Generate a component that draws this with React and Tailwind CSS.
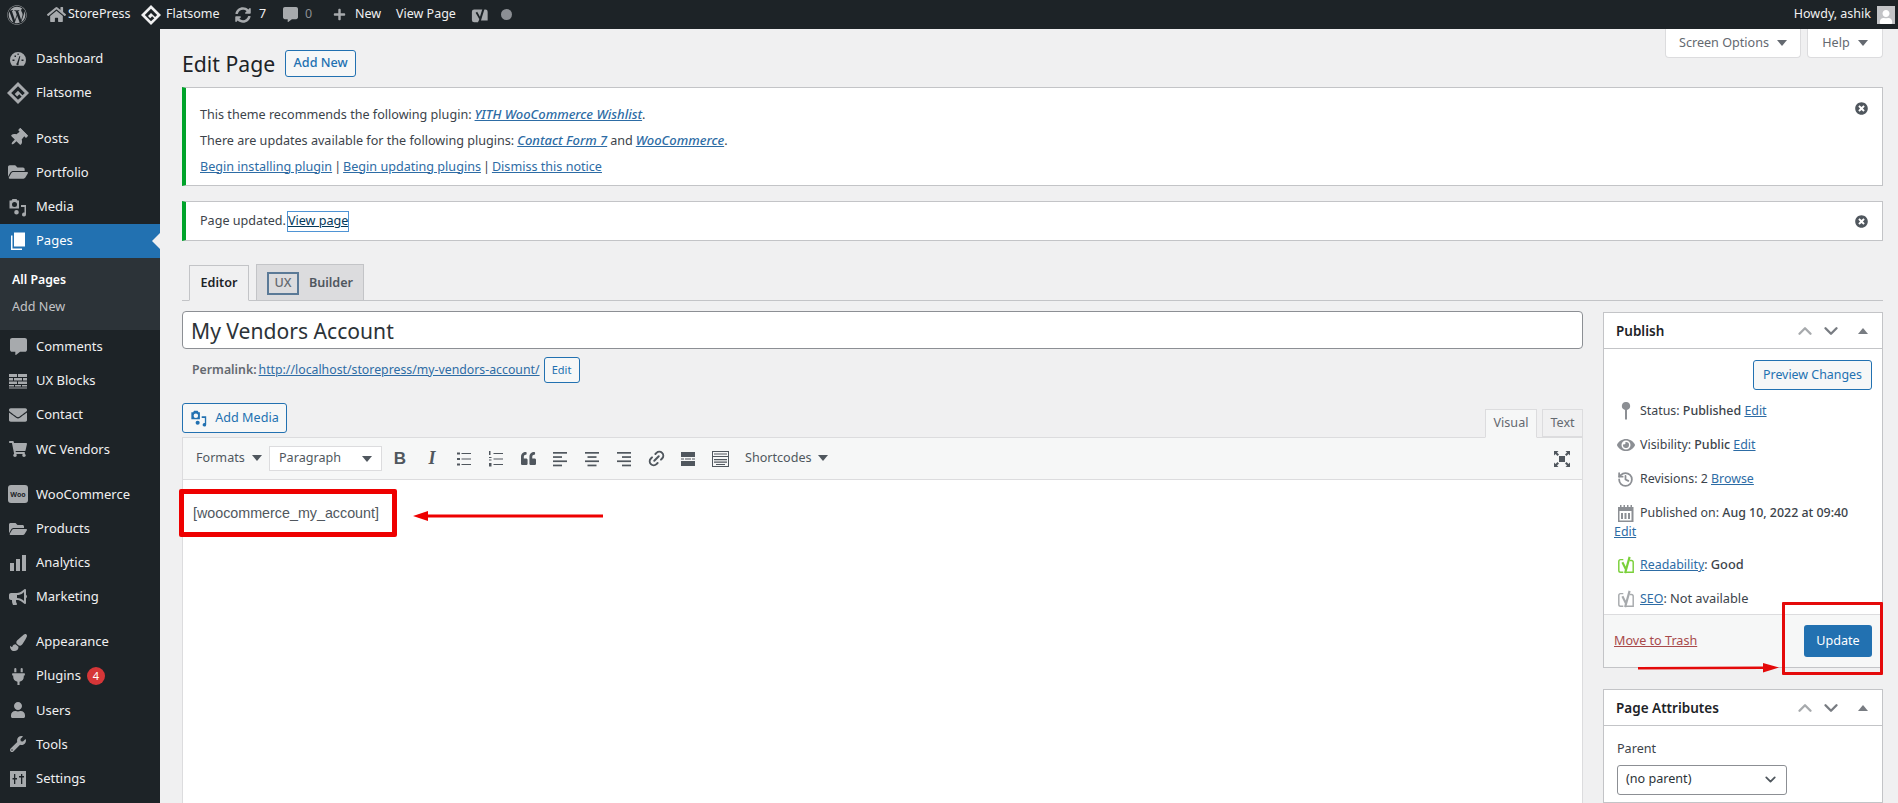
import { ChevronUp, ChevronDown, History, Link2 } from 'lucide-react'
import {
  FaWordpress, FaHome, FaSyncAlt, FaCommentAlt, FaPlus, FaThumbtack, FaFolderOpen, FaEnvelope,
  FaShoppingCart, FaBullhorn, FaPaintBrush, FaPlug, FaUser, FaWrench, FaEye, FaQuoteLeft, FaTimesCircle,
} from 'react-icons/fa'

const Gauge = ({ size = 20 }) => (
  <svg width={size} height={size} viewBox="0 0 20 20">
    <path fill="currentColor" d="M10 3a8 8 0 0 0-8 8c0 2.200.9 4.200 2.300 5.700h11.400A8 8 0 0 0 18 11a8 8 0 0 0-8-8z" />
    <path fill="#1d2327" d="M9 14l2.500-7 .8.300L10.600 14.600a1.200 1.200 0 1 1-1.600-.6zM4.500 10.500h2v1.500h-2zM13.500 10.500h2v1.500h-2zM6.500 6.500h1.500V8H6.500zM9.500 4.500h1.200V6H9.500z" />
  </svg>
)

const Diamond = ({ size = 20, hole = '#1d2327' }) => (
  <svg width={size} height={size} viewBox="0 0 20 20">
    <path fill="currentColor" d="M10 0l10 10-10 10L0 10z" />
    <path fill={hole} d="M10 3.800L16.200 10l-2.100 2.100L10 8l-3 3 2.200 2.200 2-2 2.100 2.100L10 16.200 3.800 10z" />
  </svg>
)

const MediaIcon = ({ size = 20 }) => (
  <svg width={size} height={size} viewBox="0 0 20 20" fill="currentColor">
    <path fillRule="evenodd" d="M1.500 3.500h2l1-1.500h4l1 1.500h1.500v8h-9.500zM6.500 5a2.500 2.500 0 1 0 0 5 2.500 2.500 0 0 0 0-5z" />
    <path d="M13 8h5v9.500a2 2 0 1 1-1.500-1.900V10H13zM8.500 13a2.300 2.300 0 1 1 0 4.600 2.300 2.300 0 0 1 0-4.600z" />
  </svg>
)

const PagesIcon = ({ size = 20 }) => (
  <svg width={size} height={size} viewBox="0 0 20 20" fill="currentColor">
    <path d="M6 1.500h11v14H6z" />
    <path d="M3 4.500h1.500v13H14V19H3z" />
  </svg>
)

const BlocksIcon = ({ size = 20 }) => (
  <svg width={size} height={size} viewBox="0 0 20 20" fill="currentColor">
    <path d="M1 3h8v3H1zM10 3h9v3h-9zM1 7h4v2.500H1zM6 7h8v2.500H6zM15 7h4v2.500h-4zM1 10.500h8V13H1zM10 10.500h9V13h-9zM1 14h5v1.500H1zM7 14h6v1.500H7zM14 14h5v1.500h-5zM1 16.500h18V17.500H1z" />
  </svg>
)

const WooIcon = () => (
  <div className="w-[20px] h-[18px] rounded-[3px] bg-[#a7aaad] text-[#1d2327] flex items-center justify-center text-[7px] font-bold leading-none">
    Woo
  </div>
)

const BarsIcon = ({ size = 20 }) => (
  <svg width={size} height={size} viewBox="0 0 20 20" fill="currentColor">
    <path d="M2 10h4v8H2zM8 6h4v12H8zM14 2h4v16h-4z" />
  </svg>
)

const SlidersIcon = ({ size = 20 }) => (
  <svg width={size} height={size} viewBox="0 0 20 20" fill="currentColor">
    <path fillRule="evenodd" d="M2 2h16v16H2zM6 5v4H4.500v1.500H6V15h1.300v-4.500H9V9H7.300V5zM13 5v2h-2v1.500h2V15h1.300V8.500H16V7h-1.700V5z" />
  </svg>
)

const Yoast = ({ size = 18, color = 'currentColor' }) => (
  <svg width={size} height={size} viewBox="0 0 20 20" fill="none" stroke={color} strokeWidth="1.600">
    <path d="M7 4H4a2 2 0 0 0-2 2v10a2 2 0 0 0 2 2h3M14 5h2a2 2 0 0 1 2 2v11h-8" />
    <path strokeWidth="2.400" d="M6 7l4 8M14 1l-5 18" />
  </svg>
)

const YoastSolid = () => (
  <svg width="19" height="20" viewBox="0 0 20 20">
    <path fill="currentColor" d="M3.500 4H16a2.500 2.500 0 0 1 2.500 2.500V16H9l-1 2H3.500A2.500 2.500 0 0 1 1 15.500v-9A2.500 2.500 0 0 1 3.500 4z" />
    <path fill="none" stroke="#1d2327" strokeWidth="2" d="M6 7l4 7" />
    <path fill="none" stroke="#1d2327" strokeWidth="2.200" d="M14.500 1l-5.500 18" />
  </svg>
)

const Caret = ({ className = 'text-[#50575e]' }) => (
  <svg width="10" height="6" viewBox="0 0 10 6" className={className}>
    <path fill="currentColor" d="M0 0h10L5 6z" />
  </svg>
)

const Lines = ({ rows }) => (
  <svg width="16" height="16" viewBox="0 0 16 16" fill="currentColor">
    {rows.map(([x, w], i) => (
      <rect key={i} x={x} y={1 + i * 4.200} width={w} height="1.700" />
    ))}
  </svg>
)

const NAV = [
  { icon: Gauge, label: 'Dashboard' },
  { icon: Diamond, label: 'Flatsome', size: 22, gap: true },
  { icon: FaThumbtack, label: 'Posts', size: 18, rotate: true },
  { icon: FaFolderOpen, label: 'Portfolio' },
  { icon: MediaIcon, label: 'Media' },
  { icon: PagesIcon, label: 'Pages', active: true },
  { icon: FaCommentAlt, label: 'Comments', size: 17 },
  { icon: BlocksIcon, label: 'UX Blocks' },
  { icon: FaEnvelope, label: 'Contact', size: 18 },
  { icon: FaShoppingCart, label: 'WC Vendors', size: 18, gap: true },
  { icon: WooIcon, label: 'WooCommerce' },
  { icon: FaFolderOpen, label: 'Products', size: 18 },
  { icon: BarsIcon, label: 'Analytics' },
  { icon: FaBullhorn, label: 'Marketing', size: 18, gap: true },
  { icon: FaPaintBrush, label: 'Appearance', size: 17 },
  { icon: FaPlug, label: 'Plugins', size: 17, badge: 4 },
  { icon: FaUser, label: 'Users', size: 16 },
  { icon: FaWrench, label: 'Tools', size: 16 },
  { icon: SlidersIcon, label: 'Settings' },
]

function AdminBar() {
  return (
    <header className="h-[29px] bg-[#1d2327] text-[#f0f0f1] text-[12.500px] flex items-center shrink-0">
      <span className="w-[34px] flex justify-center text-[#a7aaad]"><FaWordpress size={20} /></span>
      <span className="w-[26px] ml-[9px] flex justify-center text-[#a7aaad] -mr-[1px]"><FaHome size={19} /></span>
      <span className="w-[73px]">StorePress</span>
      <span className="w-[20px] mr-[5px] flex justify-center text-[#f0f0f1]"><Diamond size={20} /></span>
      <span className="w-[68px]">Flatsome</span>
      <span className="w-[18px] flex justify-center text-[#a7aaad]"><FaSyncAlt size={16} /></span>
      <span className="ml-[7px] w-[23px]">7</span>
      <span className="w-[16px] flex justify-center text-[#a7aaad]"><FaCommentAlt size={15} /></span>
      <span className="ml-[7px] w-[25px] text-[#8c8f94]">0</span>
      <span className="w-[18px] flex justify-center text-[#a7aaad]"><FaPlus size={13} /></span>
      <span className="ml-[7px] w-[41px]">New</span>
      <span className="w-[75px]">View Page</span>
      <span className="flex justify-center text-[#a7aaad] w-[18px]"><YoastSolid /></span>
      <span className="ml-[12px] w-[11px] h-[11px] rounded-full bg-[#8c8f94]" />
      <span className="ml-auto">Howdy, ashik</span>
      <span className="ml-[6px] mr-[3px] w-[18px] h-[18px] bg-[#c3c4c7] flex items-end justify-center text-white overflow-hidden"><FaUser size={14} /></span>
    </header>
  )
}

function Sidebar() {
  return (
    <aside className="w-[160px] shrink-0 bg-[#1d2327] pt-[13px] text-[13px] text-[#f0f0f1]">
      {NAV.map(({ icon: Icon, label, size = 20, gap, active, rotate, badge }) => (
        <div key={label} className={gap ? 'mb-[11px]' : ''}>
          <div className={`relative h-[34.150px] flex items-center ${active ? 'bg-[#2271b1] text-white' : ''}`}>
            <span className={`w-[36px] flex justify-center ${active ? 'text-white' : 'text-[#a7aaad]'} ${rotate ? 'rotate-45' : ''}`}>
              <Icon size={size} />
            </span>
            <span>{label}</span>
            {badge && (
              <span className="ml-[6px] w-[18px] h-[18px] rounded-full bg-[#d63638] text-white text-[11px] flex items-center justify-center">{badge}</span>
            )}
            {active && (
              <span className="absolute right-0 top-[9px] w-0 h-0 border-y-[8px] border-y-transparent border-r-[8px] border-r-[#f0f0f1]" />
            )}
          </div>
          {active && (
            <div className="h-[72px] bg-[#2c3338] px-[12px] pt-[8px] flex flex-col">
              <span className="h-[28px] flex items-center text-[12.300px] font-semibold text-white">All Pages</span>
              <span className="h-[28px] flex items-center text-[12.600px] text-[#c3c4c7]">Add New</span>
            </div>
          )}
        </div>
      ))}
    </aside>
  )
}

function TinyLink({ children, className = '' }) {
  return <a className={`text-[#2d6ca5] underline ${className}`}>{children}</a>
}

function Notice({ className, children }) {
  return (
    <div className={`flex justify-between border border-[#c3c4c7] border-l-[4px] border-l-[#00a32a] bg-white pl-[14px] pr-[14px] ${className}`}>
      <div>{children}</div>
      <FaTimesCircle size={13} className="text-[#50575e]" />
    </div>
  )
}

function Toolbar() {
  const tool = 'w-[32px] flex justify-center text-[#50575e]'
  return (
    <div className="h-[42px] bg-[#f6f7f7] border-b border-[#dcdcde] flex items-center pl-[13px] text-[#50575e] pr-[12px]">
      <span className="flex items-center gap-[7px] w-[73px]">Formats <Caret /></span>
      <div className="w-[113px] h-[25px] bg-white border border-[#dcdcde] flex items-center justify-between pl-[9px] pr-[9px] mr-[2px]">
        Paragraph <Caret />
      </div>
      <span className={`${tool} font-['Liberation_Sans',sans-serif] font-bold text-[17px]`}>B</span>
      <span className={`${tool} font-['Liberation_Serif',serif] font-bold italic text-[18px]`}>I</span>
      <span className={tool}>
        <svg width="16" height="16" viewBox="0 0 16 16" fill="currentColor">
          <path d="M1 1.500h3v2H1zM1 7h3v2H1zM1 12.500h3v2H1zM5.500 2h9.500v1H5.500zM5.500 7.500h9.500v1H5.500zM5.500 13h9.500v1H5.500z" />
        </svg>
      </span>
      <span className={tool}>
        <svg width="16" height="16" viewBox="0 0 16 16" fill="currentColor">
          <path d="M1 0h1.500v4H1zM1 6h2.500v1H1zM1 8.500h2.500v1H1zM1 12h2.500v3.500H1zM5.500 2h9.500v1H5.500zM5.500 7.500h9.500v1H5.500zM5.500 13h9.500v1H5.500z" />
        </svg>
      </span>
      <span className={tool}><FaQuoteLeft size={15} /></span>
      <span className={tool}><Lines rows={[[1, 14], [1, 9], [1, 14], [1, 9]]} /></span>
      <span className={tool}><Lines rows={[[1, 14], [3.500, 9], [1, 14], [3.500, 9]]} /></span>
      <span className={tool}><Lines rows={[[1, 14], [6, 9], [1, 14], [6, 9]]} /></span>
      <span className={tool}><Link2 size={19} strokeWidth={2.500} className="-rotate-45" /></span>
      <span className={tool}>
        <svg width="16" height="14" viewBox="0 0 16 14" fill="currentColor">
          <path d="M1 0h14v5H1zM1 6.500h3v1H1zM5 6.500h6v1H5zM12 6.500h3v1h-3zM1 9h14v5H1z" />
        </svg>
      </span>
      <span className={tool}>
        <svg width="19" height="18" viewBox="0 0 19 18" fill="currentColor">
          <path fillRule="evenodd" d="M1 1h17v16H1zM2 2v4h15V2zM2 7v9h15V7z" />
          <path d="M3 3.500h13v1H3zM3 9h13v1.200H3zM3 11.500h13v1.200H3zM5 14h9v1H5z" />
        </svg>
      </span>
      <span className="ml-[9px] flex items-center gap-[6px]">Shortcodes <Caret /></span>
      <span className="ml-auto text-[#50575e]">
        <svg width="16" height="16" viewBox="0 0 16 16" fill="currentColor">
          <path d="M5 5h6v6H5zM0 0h4.500L3 1.500 5 3.500 3.500 5 1.500 3 0 4.500zM16 0v4.500L14.500 3l-2 2L11 3.500l2-2L11.500 0zM0 16v-4.500L1.500 13l2-2L5 12.500l-2 2L4.500 16zM16 16h-4.500l1.500-1.500-2-2 1.500-1.500 2 2 1.500-1.500z" />
        </svg>
      </span>
    </div>
  )
}

function EditorColumn() {
  return (
    <div className="w-[1401px] shrink-0 flex flex-col">
      <div className="h-[38px] pt-[1px] bg-white border border-[#8c8f94] rounded-[4px] flex items-center pl-[8px] text-[21.100px] text-[#2c3338]">
        My Vendors Account
      </div>
      <div className="mt-[8px] h-[26px] pl-[10px] flex items-center text-[12.300px] text-[#646970]">
        <span className="font-semibold">Permalink:</span>
        <TinyLink className="ml-[2px]">http://localhost/storepress/my-vendors-account/</TinyLink>
        <span className="ml-[4px] w-[36px] h-[26px] border border-[#2271b1] rounded-[3px] bg-[#f6f7f7] text-[#2271b1] text-[11px] flex items-center justify-center">Edit</span>
      </div>
      <div className="mt-[20px] h-[34px] flex items-start justify-between">
        <button className="w-[105px] h-[30px] border border-[#2271b1] rounded-[3px] bg-[#f6f7f7] text-[#2271b1] flex items-center justify-center gap-[7px]">
          <MediaIcon size={18} /> Add Media
        </button>
        <div className="flex items-end self-end gap-[5px]">
          <span className="w-[52px] h-[29px] -mb-[1px] bg-[#f6f7f7] border border-[#dcdcde] border-b-[#f6f7f7] flex items-center justify-center text-[#646970] relative">Visual</span>
          <span className="w-[41px] h-[28px] bg-[#f0f0f1] border border-[#dcdcde] flex items-center justify-center text-[#646970]">Text</span>
        </div>
      </div>
      <div className="flex-1 bg-white border-x border-t border-[#dcdcde] flex flex-col">
        <Toolbar />
        <div className="pl-[10px] pt-[23px] font-['Liberation_Sans',sans-serif] text-[14.300px] text-[#50575e]">[woocommerce_my_account]</div>
      </div>
    </div>
  )
}

function BoxHeader({ title }) {
  return (
    <div className="h-[36px] border-b border-[#c3c4c7] flex items-center pl-[12px] pr-[14px] pt-[1px] font-semibold text-[13.500px] text-[#1d2327]">
      <span>{title}</span>
      <span className="ml-auto flex items-center text-[#787c82]">
        <ChevronUp size={22} strokeWidth={2.600} className="text-[#a7aaad]" />
        <ChevronDown size={22} strokeWidth={2.600} className="ml-[4px]" />
        <svg width="10" height="6" viewBox="0 0 10 6" className="ml-[16px]"><path fill="currentColor" d="M0 6h10L5 0z" /></svg>
      </span>
    </div>
  )
}

function MetaRow({ icon, children, className = '' }) {
  return (
    <div className={`h-[34px] flex items-center gap-[3px] ${className}`}>
      <span className="w-[23px] shrink-0 flex justify-center text-[#8c8f94]">{icon}</span>
      <span>{children}</span>
    </div>
  )
}

function PublishBox() {
  return (
    <div className="mt-[1px] bg-white border border-[#c3c4c7]">
      <BoxHeader title="Publish" />
      <div className="h-[265px] flex flex-col px-[10px] text-[#3c434a]">
        <div className="flex justify-end mt-[11px]">
          <span className="w-[119px] h-[30px] border border-[#2271b1] rounded-[3px] bg-[#f6f7f7] text-[#2271b1] text-[12.400px] flex items-center justify-center">Preview Changes</span>
        </div>
        <div className="mt-[4px] text-[12.400px]">
          <MetaRow icon={<svg width="12" height="18" viewBox="0 0 12 18" fill="currentColor"><path d="M6 0a4 4 0 0 1 1 7.900V17l-1 1-1-1V7.900A4 4 0 0 1 6 0z" /></svg>}>
            Status: <b className="font-medium">Published</b> <TinyLink>Edit</TinyLink>
          </MetaRow>
          <MetaRow icon={<FaEye size={18} />}>
            Visibility: <b className="font-medium">Public</b> <TinyLink>Edit</TinyLink>
          </MetaRow>
          <MetaRow icon={<History size={17} strokeWidth={2.500} />}>
            Revisions: 2 <TinyLink>Browse</TinyLink>
          </MetaRow>
          <MetaRow icon={
            <svg width="17" height="17" viewBox="0 0 17 17" fill="currentColor">
              <path fillRule="evenodd" d="M1 2h2V0h1.500v2h2V0H8v2h2V0h1.500v2h2V0H15v2h1.500v15H1zM2.500 6v9.500h12V6zM4 8h2v6H4zM7.500 8h2v6h-2zM11 8h2v6h-2z" />
            </svg>
          }>
            Published on: <b className="font-medium">Aug 10, 2022 at 09:40</b>
          </MetaRow>
          <TinyLink className="block -mt-[7px] h-[20px]">Edit</TinyLink>
          <MetaRow className="mt-[5px] h-[32px]" icon={<Yoast size={18} color="#7ad03a" />}>
            <TinyLink>Readability</TinyLink>: <span className="text-[12.800px] font-medium">Good</span>
          </MetaRow>
          <MetaRow className="h-[32px]" icon={<Yoast size={18} color="#a7aaad" />}>
            <TinyLink>SEO</TinyLink>: <span className="text-[12.800px]">Not available</span>
          </MetaRow>
        </div>
      </div>
      <div className="h-[53px] border-t border-[#dcdcde] bg-[#f6f7f7] flex items-center justify-between pl-[10px] pr-[10px]">
        <span className="text-[#a84a4b] underline">Move to Trash</span>
        <span className="w-[68px] h-[32px] rounded-[3px] bg-[#2271b1] text-white flex items-center justify-center">Update</span>
      </div>
    </div>
  )
}

function AttributesBox() {
  return (
    <div className="mt-[21px] flex-1 bg-white border border-[#c3c4c7]">
      <BoxHeader title="Page Attributes" />
      <div className="px-[13px] pt-[14px] text-[#3c434a]">
        <div>Parent</div>
        <div className="mt-[6px] w-[170px] h-[30px] border border-[#8c8f94] rounded-[3px] flex items-center justify-between pl-[8px] pr-[7px] text-[#2c3338]">
          (no parent)
          <ChevronDown size={17} strokeWidth={2.500} className="text-[#50575e]" />
        </div>
      </div>
    </div>
  )
}

export default function App() {
  return (
    <div className="relative h-[803px] overflow-hidden flex flex-col bg-[#f0f0f1] font-['Noto_Sans',sans-serif] text-[12.600px] text-[#3c434a]">
      <AdminBar />
      <div className="flex-1 flex min-h-0">
        <Sidebar />
        <main className="flex-1 flex flex-col pl-[22px] pr-[15px] min-w-0">
          <div className="h-[29px] shrink-0 flex justify-end gap-[6px] text-[#646970]">
            <span className="w-[136px] bg-white border border-t-0 border-[#dcdcde] rounded-b-[4px] flex items-center justify-center gap-[8px]">Screen Options <Caret className="text-[#646970]" /></span>
            <span className="w-[76px] bg-white border border-t-0 border-[#dcdcde] rounded-b-[4px] flex items-center justify-center gap-[8px]">Help <Caret className="text-[#646970]" /></span>
          </div>
          <div className="-mt-[8px] h-[27px] flex items-center shrink-0">
            <h1 className="text-[21.200px] text-[#1d2327] mr-[10px] leading-none">Edit Page</h1>
            <span className="w-[71px] h-[27px] border border-[#2271b1] rounded-[3px] bg-[#f6f7f7] text-[#2271b1] flex items-center justify-center font-medium">Add New</span>
          </div>
          <Notice className="mt-[10px] h-[99px] shrink-0 pt-[14px]">
            <p className="h-[26px] flex items-center gap-[3px]">This theme recommends the following plugin: <TinyLink className="italic text-[13px] font-medium">YITH WooCommerce Wishlist</TinyLink><span className="-ml-[3px]">.</span></p>
            <p className="h-[26px] flex items-center gap-[3px]">There are updates available for the following plugins: <TinyLink className="italic text-[13px] font-medium">Contact Form 7</TinyLink> and <TinyLink className="italic text-[13px] font-medium">WooCommerce</TinyLink><span className="-ml-[3px]">.</span></p>
            <p className="h-[26px] flex items-center gap-[2px]"><TinyLink>Begin installing plugin</TinyLink> | <TinyLink>Begin updating plugins</TinyLink> | <TinyLink>Dismiss this notice</TinyLink></p>
          </Notice>
          <Notice className="mt-[15px] h-[40px] shrink-0 items-center">
            <p className="flex items-center gap-[2px] pt-[1px]">Page updated. <a className="text-[#043959] underline outline outline-1 outline-[#4f94d4]">View page</a></p>
          </Notice>
          <div className="mt-[24px] h-[36px] shrink-0 border-b border-[#c3c4c7] flex items-end pl-[7px] gap-[7px] font-semibold">
            <span className="w-[60px] h-[36px] pt-[1px] -mb-[1px] bg-[#f0f0f1] border border-[#c3c4c7] border-b-[#f0f0f1] flex items-center justify-center text-[#1d2327]">Editor</span>
            <span className="w-[108px] h-[36px] pt-[1px] bg-[#dcdcde] border border-[#c3c4c7] border-b-0 flex items-center justify-center gap-[10px] text-[#50575e]">
              <span className="w-[32px] h-[23px] border-2 border-[#5b7a97] flex items-center justify-center text-[#646970] font-medium">UX</span>
              Builder
            </span>
          </div>
          <div className="mt-[10px] flex-1 flex gap-[20px] min-h-0">
            <EditorColumn />
            <div className="w-[280px] shrink-0 flex flex-col">
              <PublishBox />
              <AttributesBox />
            </div>
          </div>
        </main>
      </div>

      {/* red annotations on top of the screenshot */}
      <div className="absolute left-[179px] top-[489px] w-[218px] h-[48px] border-[5px] border-[#ee0000] rounded-[2px]" />
      <div className="absolute left-[1782px] top-[602px] w-[101px] h-[73px] border-[3px] border-[#e40a0a] rounded-[1px]" />
      <svg className="absolute left-[410px] top-[508px]" width="196" height="16" viewBox="0 0 196 16">
        <path fill="#ee0000" d="M3 8l15-5v3.500h175v3H18V13z" />
      </svg>
      <svg className="absolute left-[1636px] top-[660px]" width="146" height="16" viewBox="0 0 146 16">
        <path fill="#e40a0a" d="M143 7.500L127 3v3.500L2 7v2.500l125-.5V12.500z" />
      </svg>
    </div>
  )
}
